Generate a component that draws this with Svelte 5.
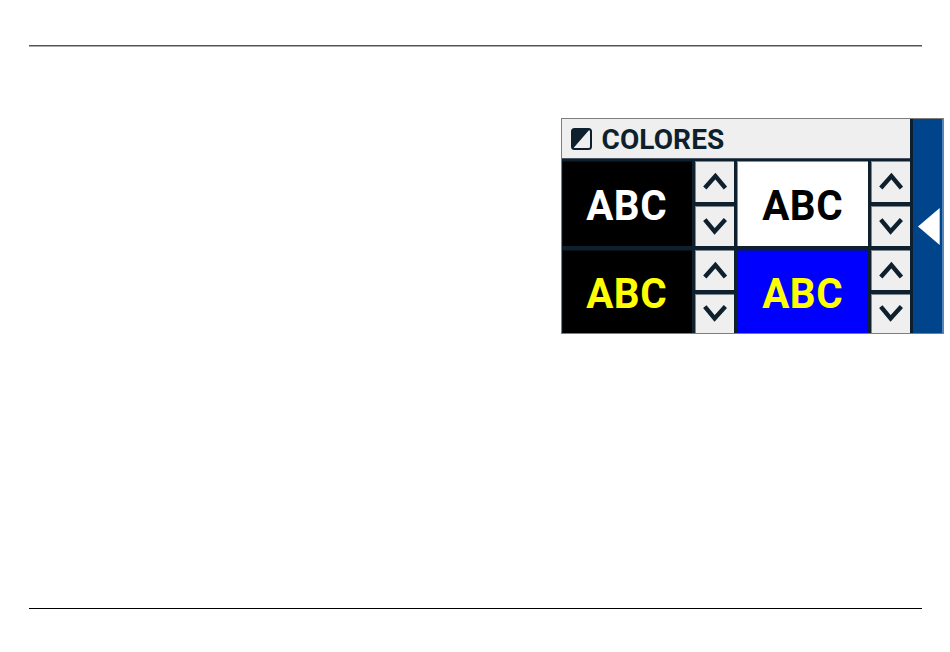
<script>
  const swatches = [
    { id: 1, color: '#ffffff', background: '#000000' },
    { id: 2, color: '#000000', background: '#ffffff' },
    { id: 3, color: '#ffff00', background: '#000000' },
    { id: 4, color: '#ffff00', background: '#0000ff' }
  ];
</script>

<main>
  <hr class="top" />

  <section class="panel">
    <div class="content">
      <header>
        <svg class="contrast" width="21" height="22" viewBox="0 0 21 22">
          <rect x="1" y="1" width="19" height="20" rx="2.5" fill="#efefef" stroke="#0e1f2d" stroke-width="2" />
          <path d="M1 20V3.5A2.5 2.5 0 0 1 3.5 1H19L2.5 20Z" fill="#0e1f2d" />
        </svg>
        <h1>COLORES</h1>
      </header>

      <div class="swatches">
        {#each swatches as swatch (swatch.id)}
          <div class="swatch" style="color: {swatch.color}; background: {swatch.background}">
            <span>ABC</span>
          </div>
          <div class="buttons">
            <button aria-label="Anterior">
              <svg width="24" height="18" viewBox="0 0 24 18">
                <path d="M1.8 16L12.4 4.1L22.4 16" />
              </svg>
            </button>
            <button aria-label="Siguiente">
              <svg width="24" height="18" viewBox="0 0 24 18">
                <path d="M1.8 2.6L11.6 14.4L22.4 2.6" />
              </svg>
            </button>
          </div>
        {/each}
      </div>
    </div>

    <button class="back" aria-label="Volver">
      <svg width="22" height="37" viewBox="0 0 22 37">
        <path d="M0 18.5L21.7 0V37Z" fill="#ffffff" />
      </svg>
    </button>
  </section>

  <hr class="bottom" />
</main>

<style>
  :global(body) {
    background: #ffffff;
  }

  main {
    display: flex;
    flex-direction: column;
    box-sizing: border-box;
    width: 950px;
    height: 652px;
    padding: 45px 6px 43px 28px;
    font-family: Roboto, sans-serif;
  }

  hr {
    box-sizing: border-box;
    width: 893px;
    margin: 0 0 0 1px;
    border: none;
  }

  .top {
    height: 2px;
    border-top: 1px solid #555555;
    border-bottom: 1px solid #aaaaaa;
  }

  .bottom {
    height: 1px;
    margin-top: auto;
    background: #000000;
  }

  .panel {
    display: flex;
    align-self: flex-end;
    gap: 3px;
    box-sizing: border-box;
    width: 383px;
    height: 216px;
    margin-top: 71px;
    border: 1px solid #7d7d7d;
    background: #0e1f2d;
  }

  .content {
    display: flex;
    flex-direction: column;
    gap: 2px;
    width: 348px;
  }

  header {
    display: flex;
    align-items: center;
    box-sizing: border-box;
    height: 40px;
    padding-left: 9px;
    border-bottom: 1px solid #4a5661;
    background: #efefef;
  }

  .contrast {
    margin-right: 9.5px;
  }

  h1 {
    margin: 3px 0 0;
    color: #0e1f2d;
    font-size: 28px;
    font-weight: 700;
    letter-spacing: 0.1px;
    line-height: 36px;
  }

  .swatches {
    display: grid;
    grid-template-columns: 130px 39px 131px 39px;
    grid-template-rows: 85px 83px;
    gap: 4px 3px;
  }

  .swatch {
    display: flex;
    align-items: center;
    justify-content: center;
    box-shadow: inset 1px 1px rgba(14, 31, 45, 0.5);
    font-size: 42.5px;
    font-weight: 700;
    line-height: 48px;
  }

  .swatch span {
    padding-top: 4px;
    letter-spacing: 0.6px;
    transform: scaleX(0.95);
  }

  .buttons {
    display: grid;
    grid-template-rows: 1fr 1fr;
    gap: 4px;
  }

  button {
    display: flex;
    align-items: center;
    justify-content: center;
    min-height: 0;
    padding: 0;
    border: none;
    background: #efefef;
  }

  .buttons button {
    box-shadow: inset 1px 1px rgba(14, 31, 45, 0.5);
  }

  .buttons path {
    fill: none;
    stroke: #0e1f2d;
    stroke-width: 4.4;
  }

  .back {
    flex: 1;
    padding-left: 3px;
    background: #00458c;
    border-right: 1px solid #5684b4;
  }
</style>
